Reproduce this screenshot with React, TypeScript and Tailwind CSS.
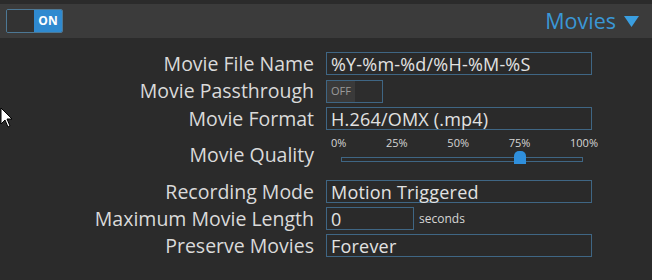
import { type ReactNode } from "react";

const font = { fontFamily: '"Open Sans", "Liberation Sans", sans-serif' };

function Row({ label, children, className }: { label: string; children: ReactNode; className?: string }) {
  return (
    <div className={"flex items-center " + (className ?? "h-[27px]")}>
      <div className="w-[314px] shrink-0 text-right text-[19.5px] leading-none text-[#dadada]">{label}</div>
      <div className="ml-[12px] flex items-center">{children}</div>
    </div>
  );
}

function TextBox({ value, w = "w-[266px]" }: { value: string; w?: string }) {
  return (
    <div className={`${w} h-[23px] border border-[#3f6684] bg-[#2a2a2a] px-[4px] flex items-center text-[18px] tracking-[0.2px] text-[#e2e2e2] leading-none`}>
      {value}
    </div>
  );
}

export default function App() {
  const ticks = ["0%", "25%", "50%", "75%", "100%"];
  return (
    <div className="relative w-[652px] h-[280px] bg-[#2b2b2b] overflow-hidden" style={font}>
      {/* Header */}
      <div className="mt-[4px] h-[34px] bg-[#3b3b3b] flex items-center justify-between pl-[6px] pr-[13px]">
        <div className="flex h-[24px] w-[57px] border border-[#4d7895] rounded-[2px] overflow-hidden">
          <div className="flex-1 bg-[#333333]" />
          <div className="w-[28px] bg-[#2f8ad0] flex items-center justify-center text-[12px] font-bold text-white">ON</div>
        </div>
        <div className="flex items-center gap-[8px] text-[#3a97d6] text-[21.5px]">
          <span>Movies</span>
          <svg width="15" height="11" viewBox="0 0 15 11">
            <polygon points="0,0 15,0 7.5,11" fill="#3a9ee0" />
          </svg>
        </div>
      </div>

      {/* Fields */}
      <div className="mt-[12px] flex flex-col">
        <Row label="Movie File Name">
          <TextBox value="%Y-%m-%d/%H-%M-%S" />
        </Row>
        <Row label="Movie Passthrough" className="h-[28px]">
          <div className="flex h-[23px] w-[57px] border border-[#3f6684] overflow-hidden">
            <div className="w-[28px] bg-[#3a3a3a] flex items-center justify-center text-[11px] text-[#9a9a9a]">OFF</div>
            <div className="flex-1 bg-[#2d2d2d]" />
          </div>
        </Row>
        <Row label="Movie Format">
          <TextBox value="H.264/OMX (.mp4)" />
        </Row>
        <Row label="Movie Quality" className="h-[46px]">
          <div className="w-[272px] h-[46px] flex flex-col pt-[5px]">
            <div className="ml-[5px] flex justify-between text-[11px] text-[#d6d6d6] leading-[11px]">
              {ticks.map((t) => (
                <span key={t}>{t}</span>
              ))}
            </div>
            <div className="relative mt-[9px] ml-[15px] w-[242px] h-[5px] border border-[#3f6684] bg-[#2a2a2a]">
              <div className="absolute left-[172px] -top-[7px] w-[12px] h-[13px] bg-[#2f8fdc] rounded-t-[5px]" />
            </div>
          </div>
        </Row>
        <Row label="Recording Mode">
          <TextBox value="Motion Triggered" />
        </Row>
        <Row label="Maximum Movie Length">
          <TextBox value="0" w="w-[88px]" />
          <span className="ml-[5px] text-[12px] text-[#d6d6d6]">seconds</span>
        </Row>
        <Row label="Preserve Movies">
          <TextBox value="Forever" />
        </Row>
      </div>

      {/* Mouse cursor */}
      <svg className="absolute left-0 top-[107px]" width="14" height="22" viewBox="0 0 14 22">
        <polygon points="1,1 1,17 5,13 8,20 10,19 7,12 12,12" fill="#ffffff" stroke="#000000" strokeWidth="1" />
      </svg>
    </div>
  );
}
